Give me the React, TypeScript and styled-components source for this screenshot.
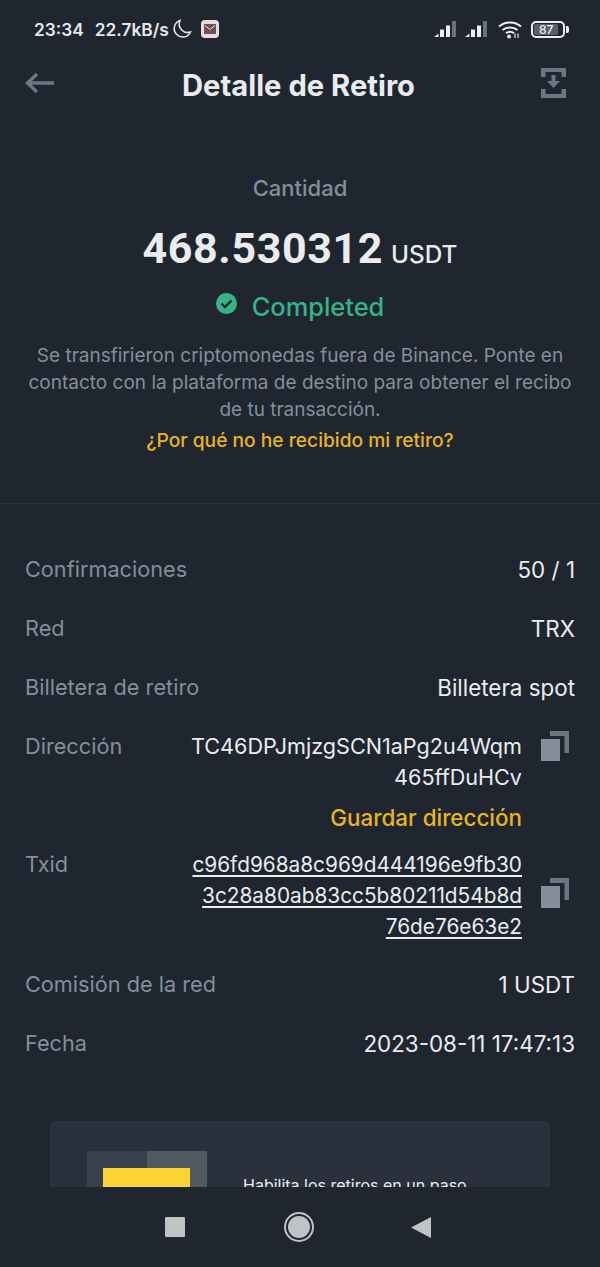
import React from 'react';
import styled, { createGlobalStyle } from 'styled-components';

const GlobalStyle = createGlobalStyle`
  html, body {
    margin: 0;
    padding: 0;
    background: #1f2630;
  }
  * {
    box-sizing: border-box;
  }
`;

const Page = styled.div`
  width: 600px;
  height: 1267px;
  display: flex;
  flex-direction: column;
  background: #1f2630;
  color: #eaecef;
  font-family: 'Inter', 'Liberation Sans', sans-serif;
  overflow: hidden;
`;

const Screen = styled.div`
  height: 1187px;
  overflow: hidden;
  flex: none;
`;

const StatusBar = styled.div`
  height: 58px;
  padding: 18px 35px 0 34px;
  display: flex;
  align-items: flex-start;
  justify-content: space-between;
`;

const StatusGroup = styled.div`
  display: flex;
  align-items: center;
  height: 22px;
`;

const StatusText = styled.span<{ $gap?: number }>`
  font-size: 17.3px;
  font-weight: 600;
  color: #e6e8eb;
  margin-right: ${(p) => p.$gap ?? 0}px;
  white-space: nowrap;
`;

const MailTile = styled.div`
  width: 18px;
  height: 18px;
  margin-left: 9px;
  border-radius: 4px;
  background: #e8dcdc;
  display: flex;
  align-items: center;
  justify-content: center;
`;

const SignalIcon = styled.svg`
  margin-right: 7px;
`;

const WifiIcon = styled.svg`
  margin-left: 2px;
`;

const Battery = styled.div`
  width: 34px;
  height: 17px;
  margin-left: 9px;
  border: 2px solid #eceef0;
  border-radius: 5px;
  padding: 1px;
  position: relative;
  &::after {
    content: '';
    position: absolute;
    right: -6px;
    top: 3px;
    width: 3px;
    height: 7px;
    border-radius: 0 2px 2px 0;
    background: #eceef0;
  }
`;

const BatteryFill = styled.div`
  height: 100%;
  width: 87%;
  background: #5a606a;
  border-radius: 2px;
  display: flex;
  align-items: center;
  justify-content: center;
  font-size: 12px;
  font-weight: 500;
  color: #f0f1f3;
`;

const Header = styled.div`
  height: 54px;
  padding: 0 34px 0 24px;
  display: flex;
  align-items: center;
  justify-content: space-between;
`;

const HeaderIcon = styled.svg`
  flex: none;
  margin-top: -5px;
`;

const Title = styled.h1`
  margin: 0;
  font-size: 29.2px;
  font-weight: 700;
  color: #e9ebee;
`;

const Summary = styled.section`
  padding: 0 25px;
  display: flex;
  flex-direction: column;
  align-items: center;
  text-align: center;
`;

const AmountLabel = styled.div`
  margin-top: 62px;
  font-size: 22px;
  line-height: 28px;
  font-weight: 500;
  color: #848e9c;
`;

const AmountRow = styled.div`
  margin-top: 20px;
  display: flex;
  align-items: baseline;
  gap: 8px;
  line-height: 52px;
`;

const Amount = styled.span`
  font-family: 'Roboto', 'Inter', sans-serif;
  font-size: 43px;
  font-weight: 700;
  letter-spacing: 0.6px;
  color: #eaecef;
`;

const Unit = styled.span`
  font-size: 24.3px;
  font-weight: 500;
  color: #eaecef;
`;

const StatusRow = styled.div`
  margin-top: 10px;
  height: 32px;
  display: flex;
  align-items: center;
  gap: 15px;
  font-size: 25.4px;
  font-weight: 500;
  color: #37b387;
`;

const StatusIcon = styled.svg`
  width: 21px;
  height: 21px;
  margin-top: -5px;
`;

const Description = styled.p`
  margin: 20px 0 0;
  font-size: 19px;
  line-height: 27px;
  color: #848e9c;
`;

const HelpLink = styled.a`
  margin-top: 4px;
  font-size: 19.2px;
  line-height: 27px;
  font-weight: 500;
  color: #e9b521;
`;

const Divider = styled.hr`
  margin: 49px 0 0;
  border: 0;
  border-top: 1px solid #2f3640;
`;

const Rows = styled.section`
  padding: 50px 25px 0;
  display: flex;
  flex-direction: column;
`;

const Row = styled.div<{ $after?: number }>`
  display: flex;
  justify-content: space-between;
  align-items: flex-start;
  line-height: 31px;
  margin-bottom: ${(p) => p.$after ?? 28}px;
`;

const Label = styled.span`
  font-size: 21.7px;
  color: #848e9c;
  white-space: nowrap;
`;

const Value = styled.span`
  font-size: 22.4px;
  color: #eaecef;
  text-align: right;
`;

const CopyValue = styled.div`
  display: flex;
  align-items: flex-start;
  gap: 19px;
`;

const ValueStack = styled.div<{ $size: number }>`
  width: 332px;
  display: flex;
  flex-direction: column;
  align-items: flex-end;
  font-size: ${(p) => p.$size}px;
  text-align: right;
  color: #eaecef;
`;

const SaveLink = styled.a`
  margin-top: 9px;
  font-size: 22.4px;
  font-weight: 500;
  color: #e9b521;
`;

const TxLink = styled.a`
  color: #eaecef;
  text-decoration: underline;
  text-underline-offset: 3px;
`;

const CopyButton = styled.svg<{ $top: number }>`
  flex: none;
  width: 28px;
  height: 30px;
  margin-top: ${(p) => p.$top}px;
  margin-right: 6px;
`;

const Promo = styled.section`
  margin: 34px 50px 0;
  height: 140px;
  padding: 30px 37px 0;
  display: flex;
  gap: 36px;
  background: #2b313c;
  border-radius: 6px;
`;

const PromoArt = styled.div`
  position: relative;
  width: 120px;
  height: 100px;
  flex: none;
  background: linear-gradient(90deg, #3a414c 50%, #525861 50%);
`;

const PromoBlock = styled.div`
  position: absolute;
  left: 16px;
  top: 17px;
  width: 87px;
  height: 60px;
  background: #fcd535;
`;

const PromoText = styled.div`
  margin-top: 24px;
  font-size: 16px;
  line-height: 20px;
  white-space: nowrap;
  color: #eaecef;
`;

const NavBar = styled.nav`
  flex: 1;
  display: flex;
  align-items: center;
  padding: 0 0 0 165px;
`;

const NavSquare = styled.div`
  width: 20px;
  height: 20px;
  border-radius: 1px;
  background: #c0c2c6;
  margin-right: 99px;
`;

const NavHome = styled.div`
  width: 30px;
  height: 30px;
  border-radius: 50%;
  border: 2px solid #c0c2c6;
  padding: 2px;
  margin-right: 97px;
  &::before {
    content: '';
    display: block;
    width: 100%;
    height: 100%;
    border-radius: 50%;
    background: #c0c2c6;
  }
`;

const NavBack = styled.svg`
  width: 20px;
  height: 23px;
`;

const Signal = () => (
  <SignalIcon width="24" height="18" viewBox="0 0 24 18">
    <path d="M0 17 L4.5 13.5 V17 Z" fill="#eceef0" />
    <rect x="6" y="9.5" width="4" height="7.5" fill="#eceef0" />
    <rect x="12" y="5.5" width="4" height="11.5" fill="#eceef0" />
    <rect x="18" y="1" width="4" height="16" fill="#6b717a" />
  </SignalIcon>
);

const CopyIcon: React.FC<{ top: number }> = ({ top }) => (
  <CopyButton $top={top} viewBox="0 0 28 30">
    <path d="M9 0 H28 V22 H23.5 V5 H9 Z" fill="#6d7582" />
    <rect x="0" y="8" width="19" height="22" fill="#848e9c" />
  </CopyButton>
);

const App: React.FC = () => (
  <Page>
    <GlobalStyle />
    <Screen>
      <StatusBar>
        <StatusGroup>
          <StatusText $gap={11}>23:34</StatusText>
          <StatusText $gap={3}>22.7kB/s</StatusText>
          <svg width="20" height="20" viewBox="0 0 20 20">
            <path
              d="M8 1.5 A8.5 8.5 0 1 0 18.5 13 A8.5 8.5 0 0 1 8 1.5 Z"
              fill="none"
              stroke="#e6e8eb"
              strokeWidth="1.5"
            />
          </svg>
          <MailTile>
            <svg width="12" height="10" viewBox="0 0 12 10">
              <rect width="12" height="10" fill="#6d5357" />
              <path d="M1 1.5 L6 5.5 L11 1.5" fill="none" stroke="#e8dcdc" strokeWidth="1" />
            </svg>
          </MailTile>
        </StatusGroup>
        <StatusGroup>
          <Signal />
          <Signal />
          <WifiIcon width="24" height="19" viewBox="0 0 24 19">
            <g fill="none" stroke="#eceef0" strokeWidth="2">
              <path d="M1 6.5 C7 1 17 1 23 6.5" />
              <path d="M4.5 10 C8.5 6.5 15.5 6.5 19.5 10" />
              <path d="M8 13.2 C10.5 11.5 13.5 11.5 16 13.2" />
            </g>
            <circle cx="11" cy="16.5" r="2" fill="#eceef0" />
            <path d="M17 13.5 V18 M20 13.5 V18" stroke="#c8cacd" strokeWidth="1.4" />
          </WifiIcon>
          <Battery>
            <BatteryFill>87</BatteryFill>
          </Battery>
        </StatusGroup>
      </StatusBar>
      <Header>
        <HeaderIcon width="32" height="24" viewBox="0 0 32 24">
          <path
            d="M30 12 H4 M13 3 L3.5 12 L13 21"
            fill="none"
            stroke="#6e7683"
            strokeWidth="3.4"
          />
        </HeaderIcon>
        <Title>Detalle de Retiro</Title>
        <HeaderIcon width="25" height="30" viewBox="0 0 25 30">
          <path d="M0 0 H25 V9 H20.5 V4 H4.5 V9 H0 Z" fill="#6e7683" />
          <path d="M0 30 H25 V21 H20.5 V26 H4.5 V21 H0 Z" fill="#6e7683" />
          <path d="M10.5 7 H14.5 V13 H19 L12.5 20 L6 13 H10.5 Z" fill="#6e7683" />
        </HeaderIcon>
      </Header>
      <Summary>
        <AmountLabel>Cantidad</AmountLabel>
        <AmountRow>
          <Amount>468.530312</Amount>
          <Unit>USDT</Unit>
        </AmountRow>
        <StatusRow>
          <StatusIcon viewBox="0 0 21 21">
            <circle cx="10.5" cy="10.5" r="10.5" fill="#37b387" />
            <path d="M5.5 10.5 L9 14 L15.5 7.5" fill="none" stroke="#1f2630" strokeWidth="2.4" />
          </StatusIcon>
          Completed
        </StatusRow>
        <Description>
          Se transfirieron criptomonedas fuera de Binance. Ponte en
          <br />
          contacto con la plataforma de destino para obtener el recibo
          <br />
          de tu transacción.
        </Description>
        <HelpLink>¿Por qué no he recibido mi retiro?</HelpLink>
      </Summary>
      <Divider />
      <Rows>
        <Row>
          <Label>Confirmaciones</Label>
          <Value>50 / 1</Value>
        </Row>
        <Row>
          <Label>Red</Label>
          <Value>TRX</Value>
        </Row>
        <Row>
          <Label>Billetera de retiro</Label>
          <Value>Billetera spot</Value>
        </Row>
        <Row $after={16}>
          <Label>Dirección</Label>
          <CopyValue>
            <ValueStack $size={21.6}>
              <span>TC46DPJmjzgSCN1aPg2u4Wqm</span>
              <span>465ffDuHCv</span>
              <SaveLink>Guardar dirección</SaveLink>
            </ValueStack>
            <CopyIcon top={0} />
          </CopyValue>
        </Row>
        <Row $after={27}>
          <Label>Txid</Label>
          <CopyValue>
            <ValueStack $size={20.8}>
              <TxLink>c96fd968a8c969d444196e9fb30</TxLink>
              <TxLink>3c28a80ab83cc5b80211d54b8d</TxLink>
              <TxLink>76de76e63e2</TxLink>
            </ValueStack>
            <CopyIcon top={29} />
          </CopyValue>
        </Row>
        <Row>
          <Label>Comisión de la red</Label>
          <Value>1 USDT</Value>
        </Row>
        <Row>
          <Label>Fecha</Label>
          <Value>2023-08-11 17:47:13</Value>
        </Row>
      </Rows>
      <Promo>
        <PromoArt>
          <PromoBlock />
        </PromoArt>
        <PromoText>Habilita los retiros en un paso</PromoText>
      </Promo>
    </Screen>
    <NavBar>
      <NavSquare />
      <NavHome />
      <NavBack viewBox="0 0 20 23">
        <path d="M20 1 V22 L0 11.5 Z" fill="#c0c2c6" />
      </NavBack>
    </NavBar>
  </Page>
);

export default App;
